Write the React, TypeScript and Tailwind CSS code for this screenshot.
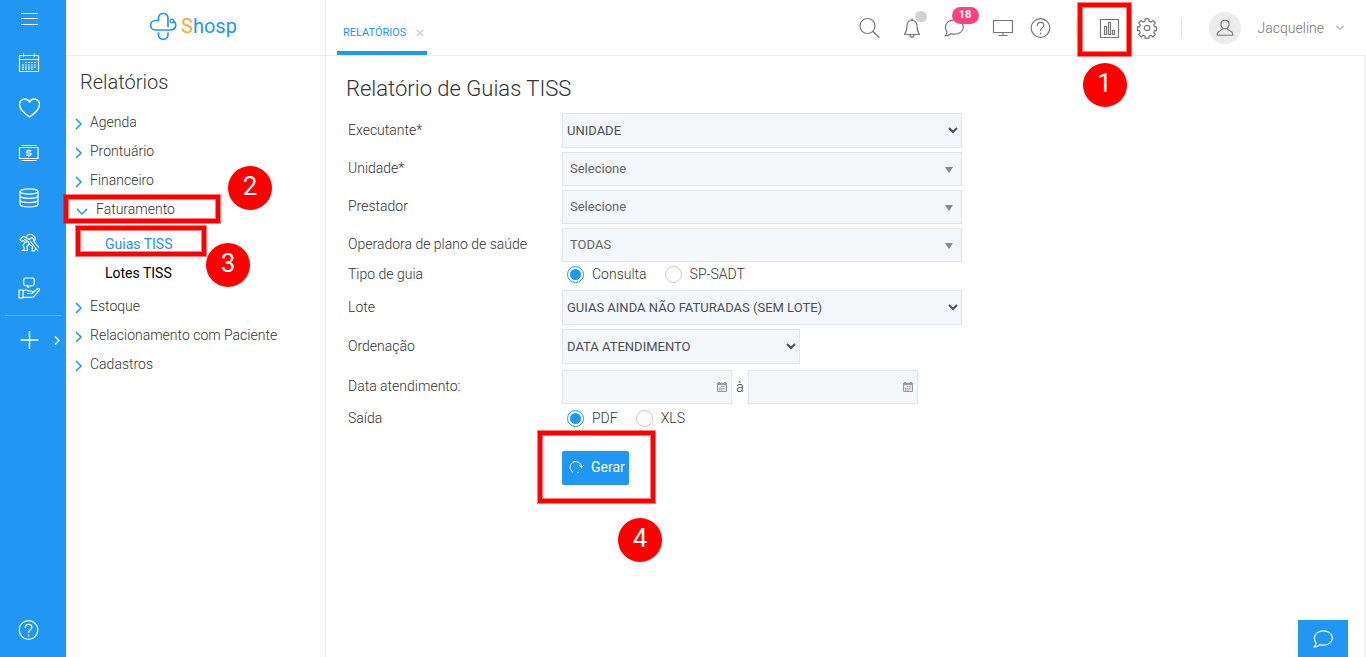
import { useState, type ReactNode } from 'react';

interface IconProps {
  children: ReactNode;
  size?: number;
}

// Base dos ícones de traço fino — viewBox 22x22
function Icon({ children, size = 22 }: IconProps) {
  return (
    <svg
      width={size}
      height={size}
      viewBox="0 0 22 22"
      fill="none"
      stroke="currentColor"
      strokeWidth="1.2"
      strokeLinecap="round"
      strokeLinejoin="round"
      className="shrink-0"
      aria-hidden="true"
    >
      {children}
    </svg>
  );
}

function HelpIcon() {
  return (
    <Icon>
      <circle cx="10.500" cy="11" r="9.300" />
      <path d="M7.300 8.600c0-2 1.300-3.300 3.300-3.300s3.300 1.300 3.300 3c0 2.600-3.300 2.600-3.300 5.200M10.600 16v1" />
    </Icon>
  );
}

function ChatIcon() {
  return (
    <Icon>
      <path d="M11.400 2.800c5 0 9 3.200 9 7.200s-4 7.200-9 7.200c-1.300 0-2.600-.2-3.700-.6-1.300 1.500-3.200 2.300-5.700 2.300 1.400-1.100 2-2.300 2.100-3.900-1.100-1.300-1.700-3.200-1.700-5 0-4 4-7.200 9-7.200z" />
    </Icon>
  );
}

const RAIL = [
  {
    label: 'Agenda',
    icon: (
      <Icon>
        <path d="M1.500 3.500h19v16h-19zM1.500 7.500h19M5.500 1.500v3.500M16.500 1.500v3.500" strokeLinecap="butt" />
        <path d="M7 10.500h12M4 13h15M4 15.200h15M4 17.200h12" strokeDasharray="1.800 1.200" strokeLinecap="butt" />
      </Icon>
    ),
  },
  {
    label: 'Prontuário',
    icon: (
      <Icon>
        <path strokeWidth="1.400" d="M11.500 20C6.500 16.500 1.500 12.500 1.500 7.500 1.500 4.300 3.900 2 6.800 2 8.900 2 10.700 3.200 11.500 5.200 12.300 3.200 14.100 2 16.200 2 19.100 2 21.500 4.300 21.500 7.500c0 5-5 9-10 12.500z" />
      </Icon>
    ),
  },
  {
    label: 'Financeiro',
    icon: (
      <Icon>
        <path d="M1.500 5.500h18.500v11H1.500zM3.500 3.500h15M3.500 18.500h15" strokeLinecap="butt" />
        <path d="M13 8.800H9.300c-1 0-1 2.200 0 2.200h3c1 0 1 2.200 0 2.200H8.600M10.800 7.800v1M10.800 13.200v1" />
      </Icon>
    ),
  },
  {
    label: 'Faturamento',
    icon: (
      <Icon>
        <ellipse cx="11" cy="4.500" rx="9" ry="2.700" />
        <path d="M2 4.500v12.800c0 1.500 4 2.700 9 2.700s9-1.200 9-2.700V4.500M2 8.700c0 1.500 4 2.700 9 2.700s9-1.200 9-2.700M2 13c0 1.500 4 2.700 9 2.700s9-1.200 9-2.700" />
      </Icon>
    ),
  },
  {
    label: 'Estoque',
    icon: (
      <Icon>
        <path strokeWidth="1.100" d="M8 5.500 10 2.500h4l2.500 2 1 3-1.500 1.500M8 5.500l-3-1-3 3 1.500 2 2-1 1.500 2-2 2.500 1.500 4-2.500 1.500h5.500l-.5-4 2.500-2.500M7 10.500l3-1 1.500 2.500M8 5.500l3 2 3-2 2 2.500M12.500 9.500l7.500 9.500M15.500 9l5 6M11.500 12.500l3 2-.5 4.500h2.500l1-2.500M6.500 7.500 9 8.500" />
      </Icon>
    ),
  },
  {
    label: 'Relacionamento',
    icon: (
      <Icon>
        <path d="M7.500 1h7c1 0 1.800.8 1.800 1.800v4c0 1-.8 1.800-1.800 1.800h-2l-2.500 2V8.600H7.500c-1 0-1.800-.8-1.800-1.800v-4C5.700 1.800 6.500 1 7.500 1z" />
        <path d="M1 13h4v8H1zM5 14.200c2-1.500 4-1.500 5.500-.2h3c1.500 0 1.500 2.500 0 2.500H9.500M15 15.500l4.500-3.700c1.300-.8 2.500.5 1.700 1.500L16 19.300c-.5.700-1 1-2 1H5" />
      </Icon>
    ),
  },
];

// Marcador numerado do passo a passo
function Step({ n }: { n: number }) {
  return (
    <span className="flex h-11 w-11 items-center justify-center rounded-full bg-[#ff0000] pb-1 text-[26px] font-normal leading-8 text-white">
      {n}
    </span>
  );
}

function Chevron({ open = false }: { open?: boolean }) {
  return (
    <svg width="12" height="12" viewBox="0 0 12 12" fill="none" stroke="#2196f3" strokeWidth="1.500" className="mt-1 shrink-0" aria-hidden="true">
      <path d={open ? 'M1 4l5 5 5-5' : 'M2 1l5 5-5 5'} />
    </svg>
  );
}

function MenuItem({ label, open, children }: { label: string; open?: boolean; children?: ReactNode }) {
  return (
    <li className="relative">
      <a href="#" className={`flex h-[29px] items-center ${open ? 'gap-2 pl-[10px]' : 'gap-1 pl-2'}`}>
        <Chevron open={open} />
        {label}
      </a>
      {children}
    </li>
  );
}

function Rail() {
  return (
    <nav className="flex w-[66px] shrink-0 flex-col bg-[#2196f3] pb-4 text-white">
      <button aria-label="Menu" className="mb-1 flex h-9 items-center pl-[18px]">
        <Icon>
          <path d="M3 6.500h17M3 11.500h17M3 17.500h17" strokeLinecap="butt" />
        </Icon>
      </button>
      {RAIL.map((item) => (
        <a key={item.label} href="#" aria-label={item.label} className="flex h-[45px] items-center pl-[18px]">
          {item.icon}
        </a>
      ))}
      <div className="mx-[5px] mt-[5px] h-px bg-white/30" />
      <button aria-label="Adicionar" className="flex h-12 items-center gap-[13px] pl-[18px]">
        <Icon>
          <path d="M11.500 2v18M2.500 11h18" strokeWidth="1.400" strokeLinecap="butt" />
        </Icon>
        <svg width="8" height="10" viewBox="0 0 8 10" fill="none" stroke="currentColor" strokeWidth="1.500" aria-hidden="true">
          <path d="M2 1.500L6 5.500 2 9.500" />
        </svg>
      </button>
      <a href="#" aria-label="Ajuda" className="mt-auto pl-[18px]">
        <HelpIcon />
      </a>
    </nav>
  );
}

function Logo() {
  return (
    <a href="#" aria-label="Shosp" className="flex h-[55px] items-center justify-center pb-[3px] pr-[5px]">
      <svg width="28" height="30" viewBox="0 0 28 30" fill="none" stroke="#2196f3" strokeWidth="1.700" strokeLinecap="round" className="mr-1" aria-hidden="true">
        <path d="M19 15.500V7c0-6-9.500-6-9.500 0v2.500H6.500c-6.500 0-6.500 9.500 0 9.500h15c6 0 6.500-7 3-8.800" />
        <path d="M9.500 22v1.500c0 6.500 9.500 6.500 9.500 0V22" />
        <circle cx="23" cy="10" r="1.800" strokeWidth="1.300" />
      </svg>
      <span className="text-xl font-normal text-[#2196f3]">
        <span className="text-[#ffa726]">S</span>hosp
      </span>
    </a>
  );
}

function Sidebar() {
  return (
    <aside className="w-[260px] shrink-0 border-r border-[#ececec]">
      <div className="border-b border-[#ececec]">
        <Logo />
      </div>
      <h2 className="mb-[11px] mt-3 pl-[14px] text-xl leading-7">Relatórios</h2>
      <ul>
        <MenuItem label="Agenda" />
        <MenuItem label="Prontuário" />
        <MenuItem label="Financeiro" />
        <MenuItem label="Faturamento" open>
          <span className="absolute -left-[2px] top-px h-7 w-[156px] border-4 border-[#ff0000] ring-1 ring-[#ff0000]/50 inset-ring-1 inset-ring-[#ff0000]/50" />
          <span className="absolute -top-7 left-[162px]">
            <Step n={2} />
          </span>
          <ul className="pb-1 pl-[39px] pt-[6px] font-normal">
            <li className="relative">
              <a href="#" className="flex h-[29px] items-center text-[#2196f3]">Guias TISS</a>
              <span className="absolute -left-[29px] -top-[3px] h-[30px] w-[130px] border-4 border-[#ff0000] ring-1 ring-[#ff0000]/50 inset-ring-1 inset-ring-[#ff0000]/50" />
              <span className="absolute left-[101px] top-[14px]">
                <Step n={3} />
              </span>
            </li>
            <li>
              <a href="#" className="flex h-[29px] items-center text-black">Lotes TISS</a>
            </li>
          </ul>
        </MenuItem>
        <MenuItem label="Estoque" />
        <MenuItem label="Relacionamento com Paciente" />
        <MenuItem label="Cadastros" />
      </ul>
    </aside>
  );
}

function Header() {
  return (
    <header className="flex h-14 items-start border-b border-[#ececec] text-[#777]">
      <div className="ml-[11px] flex h-[55px] w-[90px] items-center gap-[10px] border-b-4 border-[#2196f3] pl-[6px] pt-[14px] text-[11px] font-normal">
        <a href="#" className="text-[#2196f3]">RELATÓRIOS</a>
        <button aria-label="Fechar aba">
          <svg width="8" height="8" viewBox="0 0 8 8" stroke="#ccc" strokeWidth="1.300" aria-hidden="true">
            <path d="M1 1l6 6M7 1L1 7" />
          </svg>
        </button>
      </div>
      <div className="ml-auto flex h-[55px] items-center pr-[21px]">
        <button aria-label="Buscar" className="mr-[21px]">
          <Icon>
            <circle cx="9.500" cy="9" r="7.500" />
            <path d="M15 14.500l6 6" />
          </Icon>
        </button>
        <button aria-label="Notificações" className="relative mr-5">
          <Icon>
            <path d="M11 3.500c-3.500 0-5 2.500-5 5.500 0 5-1.500 7-2.500 8.500h15c-1-1.500-2.500-3.500-2.500-8.500 0-3-1.500-5.500-5-5.500zM10 3.500c0-2 2-2 2 0M9 17.500c0 3.500 4 3.500 4 0" />
          </Icon>
          <span className="absolute -top-[6px] left-[14px] h-[11px] w-3 rounded-full bg-[#d2d2d2]" />
        </button>
        <button aria-label="Mensagens" className="relative mr-[27px]">
          <ChatIcon />
          <span className="absolute -top-[10px] left-[9px] flex h-[17px] w-[27px] items-center justify-center rounded-full bg-[#ff4081] text-[11px] font-bold leading-4 text-white">
            18
          </span>
        </button>
        <button aria-label="Monitor" className="mr-4">
          <Icon>
            <path d="M1.500 3.500h19v12h-19zM11 15.500v3M6.500 18.500h9" strokeLinecap="butt" />
          </Icon>
        </button>
        <button aria-label="Ajuda">
          <HelpIcon />
        </button>
        <span className="ml-6 mr-[21px] h-4 w-px bg-[#ddd]" />
        <button aria-label="Relatórios" className="relative mr-4">
          <Icon>
            <path d="M2.500 2.500h18v18h-18z" strokeLinejoin="miter" />
            <path d="M6.500 9.500h2v8h-2zM10.500 5.500h2v12h-2zM14.500 13.500h2v4h-2z" strokeLinejoin="miter" />
          </Icon>
          <span className="absolute -left-5 -top-[14px] h-[53px] w-[53px] border-4 border-[#ff0000] ring-1 ring-[#ff0000]/50 inset-ring-1 inset-ring-[#ff0000]/50" />
          <span className="absolute -left-[15px] top-[46px]">
            <Step n={1} />
          </span>
        </button>
        <button aria-label="Configurações">
          <Icon>
            <circle cx="11" cy="11" r="2.700" />
            <path d="M9 1.800h4v2.500l2 .8 1.800-1.700 2.500 2.600-1.600 1.900.8 1.900h2v3.800h-2l-.8 1.900 1.600 1.900-2.500 2.600-1.800-1.700-2 .8v2H9v-2l-2-.8L5.200 20l-2.500-2.600 1.600-1.900-.8-1.900h-2V9.800h2l.8-1.900L2.700 6l2.500-2.600L7 5.100l2-.8z" />
          </Icon>
        </button>
        <span className="ml-[23px] mr-[27px] h-4 w-px bg-[#ddd]" />
        <button className="flex items-center text-sm">
          <span className="mr-[17px] flex h-8 w-8 items-center justify-center rounded-full bg-[#ececec]">
            <Icon size={20}>
              <path d="M11 2.500c3 0 4.500 2 4.500 4.500S13.500 12 11 12 6.500 9.500 6.500 7 8 2.500 11 2.500zM8.500 11.500c0 2.500-5 2-6 5.500v2h17v-2c-1-3.500-6-3-6-5.500" />
            </Icon>
          </span>
          Jacqueline
          <svg width="10" height="6" viewBox="0 0 10 6" fill="none" stroke="currentColor" className="ml-[11px]" aria-hidden="true">
            <path d="M1.500 1l3.500 3.500L8.500 1" />
          </svg>
        </button>
      </div>
    </header>
  );
}

function Row({ label, htmlFor, className = '', children }: { label: string; htmlFor?: string; className?: string; children: ReactNode }) {
  return (
    <div className={`flex items-center ${className}`}>
      {htmlFor ? (
        <label htmlFor={htmlFor} className="w-[214px] shrink-0 pb-0.5">{label}</label>
      ) : (
        <span className="w-[214px] shrink-0">{label}</span>
      )}
      {children}
    </div>
  );
}

function NativeSelect({ id, option, className }: { id: string; option: string; className: string }) {
  return (
    <select id={id} className={`h-[35px] border border-[#dfe6ec] bg-[#f3f7fa] text-[13px] font-normal text-[#4c4f56] ${className}`}>
      <option>{option}</option>
    </select>
  );
}

function SearchSelect({ id, option }: { id: string; option: string }) {
  return (
    <div className="relative w-[400px]">
      <select id={id} className="h-[34px] w-full appearance-none border border-[#dfe6ec] bg-[#f3f7fa] pl-[7px] text-[13px] font-normal text-[#666]">
        <option>{option}</option>
      </select>
      <svg width="8" height="6" viewBox="0 0 8 6" className="pointer-events-none absolute right-[9px] top-[15px]" aria-hidden="true">
        <path d="M0 0h8L4 6z" fill="#888" />
      </svg>
    </div>
  );
}

function DateField({ id, label }: { id: string; label: string }) {
  return (
    <div className="relative w-[170px]">
      <input id={id} aria-label={label} type="text" className="h-[34px] w-full border border-[#dfe6ec] bg-[#f3f7fa] px-2 text-[13px]" />
      <svg width="10" height="10" viewBox="0 0 10 10" className="pointer-events-none absolute right-[5px] top-3" aria-hidden="true">
        <path d="M.5 1.500h9v8h-9z" fill="#e4e4e4" stroke="#999" />
        <path d="M0 1h10v2H0zM1 0h2v1H1zM7 0h2v1H7z" fill="#999" />
        <path d="M4 4.500h4M2 6.500h6M2 8h4" stroke="#aaa" strokeDasharray="1.500 .5" />
      </svg>
    </div>
  );
}

function Radio({ name, value, checked, onChange }: { name: string; value: string; checked: boolean; onChange: (v: string) => void }) {
  return (
    <label className="flex items-center gap-2">
      <input
        type="radio"
        name={name}
        checked={checked}
        onChange={() => onChange(value)}
        className="h-[17px] w-[17px] appearance-none rounded-full border border-[#c8c8c8] bg-clip-content p-[2px] checked:border-[#2196f3] checked:bg-[#2196f3]"
      />
      {value}
    </label>
  );
}

function ReportForm() {
  const [tipo, setTipo] = useState('Consulta');
  const [saida, setSaida] = useState('PDF');

  return (
    <form className="pl-[2px]" onSubmit={(e) => e.preventDefault()}>
      <Row label="Executante*" htmlFor="executante" className="mb-1">
        <NativeSelect id="executante" option="UNIDADE" className="w-[400px]" />
      </Row>
      <Row label="Unidade*" htmlFor="unidade" className="mb-1">
        <SearchSelect id="unidade" option="Selecione" />
      </Row>
      <Row label="Prestador" htmlFor="prestador" className="mb-1">
        <SearchSelect id="prestador" option="Selecione" />
      </Row>
      <Row label="Operadora de plano de saúde" htmlFor="operadora">
        <SearchSelect id="operadora" option="TODAS" />
      </Row>
      <Row label="Tipo de guia" className="mb-1 h-6">
        <div className="flex gap-[18px] pl-[5px]">
          <Radio name="tipo" value="Consulta" checked={tipo === 'Consulta'} onChange={setTipo} />
          <Radio name="tipo" value="SP-SADT" checked={tipo === 'SP-SADT'} onChange={setTipo} />
        </div>
      </Row>
      <Row label="Lote" htmlFor="lote" className="mb-1">
        <NativeSelect id="lote" option="GUIAS AINDA NÃO FATURADAS (SEM LOTE)" className="w-[400px]" />
      </Row>
      <Row label="Ordenação" htmlFor="ordenacao" className="mb-[6px]">
        <NativeSelect id="ordenacao" option="DATA ATENDIMENTO" className="w-[238px]" />
      </Row>
      <Row label="Data atendimento:" htmlFor="data-inicio">
        <DateField id="data-inicio" label="Data inicial" />
        <span className="w-4 text-center">à</span>
        <DateField id="data-fim" label="Data final" />
      </Row>
      <Row label="Saída" className="h-7">
        <div className="flex gap-[18px] pl-[5px]">
          <Radio name="saida" value="PDF" checked={saida === 'PDF'} onChange={setSaida} />
          <Radio name="saida" value="XLS" checked={saida === 'XLS'} onChange={setSaida} />
        </div>
      </Row>
      <div className="relative ml-[214px] mt-[19px] w-[67px]">
        <button type="submit" className="flex h-[34px] w-full items-center gap-[7px] rounded-xs bg-[#2196f3] pb-0.5 pl-[7px] text-sm font-normal text-white">
          <svg width="15" height="14" viewBox="0 0 15 14" fill="none" stroke="currentColor" className="shrink-0" aria-hidden="true">
            <path d="M4 12.200A5.700 5.700 0 1 1 12.500 7M10 5l2.500 2.500L15 5M9.500 12.400l-1 .3" />
          </svg>
          Gerar
        </button>
        <span className="pointer-events-none absolute -left-6 -top-5 h-[72px] w-[117px] border-4 border-[#ff0000] ring-1 ring-[#ff0000]/50 inset-ring-1 inset-ring-[#ff0000]/50" />
        <span className="absolute left-14 top-[67px]">
          <Step n={4} />
        </span>
      </div>
    </form>
  );
}

export default function App() {
  return (
    <div className="flex min-h-screen bg-white font-['Roboto',sans-serif] text-sm font-light text-[#333]">
      <Rail />
      <Sidebar />
      <div className="flex min-w-0 grow flex-col">
        <Header />
        <main className="grow border-r-2 border-[#f3f3f3] pl-5">
          <h1 className="mb-2 mt-[17px] text-[22px] leading-8">Relatório de Guias TISS</h1>
          <ReportForm />
        </main>
      </div>
      <button aria-label="Abrir chat" className="fixed bottom-0 right-[18px] flex h-[37px] w-[50px] items-center justify-center bg-[#2196f3] text-white shadow-md">
        <ChatIcon />
      </button>
    </div>
  );
}
